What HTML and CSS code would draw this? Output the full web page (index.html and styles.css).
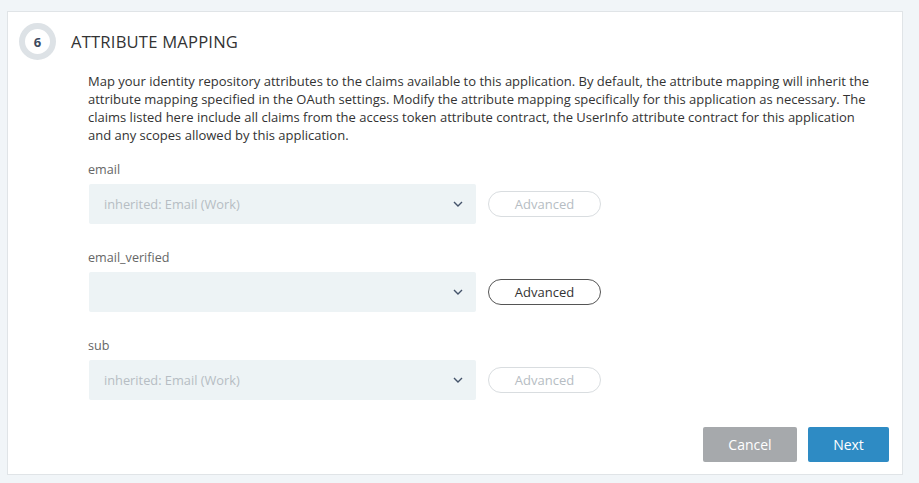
FILE: index.html
```html
<!DOCTYPE html>
<html>
<head>
<meta charset="utf-8">
<link rel="stylesheet" href="styles.css">
</head>
<body>
<div class="card">
  <div class="header">
    <div class="step">6</div>
    <h2 class="title">ATTRIBUTE MAPPING</h2>
  </div>
  <div class="content">
    <p class="desc">Map your identity repository attributes to the claims available to this application. By default, the attribute mapping will inherit the attribute mapping specified in the OAuth settings. Modify the attribute mapping specifically for this application as necessary. The claims listed here include all claims from the access token attribute contract, the UserInfo attribute contract for this application and any scopes allowed by this application.</p>
    <div class="field">
      <div class="label">email</div>
      <div class="row">
        <div class="select"><span class="placeholder">inherited: Email (Work)</span><svg class="chev" width="10" height="6" viewBox="0 0 10 6"><path d="M1 1 L5 5 L9 1" fill="none" stroke="#44536a" stroke-width="1.4"/></svg></div>
        <button class="adv disabled">Advanced</button>
      </div>
    </div>
    <div class="field">
      <div class="label">email_verified</div>
      <div class="row">
        <div class="select"><span class="placeholder"></span><svg class="chev" width="10" height="6" viewBox="0 0 10 6"><path d="M1 1 L5 5 L9 1" fill="none" stroke="#44536a" stroke-width="1.4"/></svg></div>
        <button class="adv">Advanced</button>
      </div>
    </div>
    <div class="field">
      <div class="label">sub</div>
      <div class="row">
        <div class="select"><span class="placeholder">inherited: Email (Work)</span><svg class="chev" width="10" height="6" viewBox="0 0 10 6"><path d="M1 1 L5 5 L9 1" fill="none" stroke="#44536a" stroke-width="1.4"/></svg></div>
        <button class="adv disabled">Advanced</button>
      </div>
    </div>
  </div>
  <div class="footer">
    <button class="btn cancel">Cancel</button>
    <button class="btn next">Next</button>
  </div>
</div>
</body>
</html>
```
FILE: styles.css
```css
html, body {
  margin: 0;
  padding: 0;
  background: #f1f5f8;
  font-family: "Open Sans", "Liberation Sans", sans-serif;
}
body {
  padding: 11px 0 0 7px;
}
.card {
  box-sizing: border-box;
  width: 896px;
  height: 464px;
  background: #fff;
  border: 1px solid #e0e4e7;
  display: flex;
  flex-direction: column;
}
.header {
  display: flex;
  align-items: center;
  padding: 11px 0 0 11px;
  height: 37px;
}
.step {
  box-sizing: border-box;
  width: 37px;
  height: 37px;
  border-radius: 50%;
  border: 6px solid #dde2e6;
  display: flex;
  align-items: center;
  justify-content: center;
  font-size: 13px;
  font-weight: 700;
  color: #3d4b5f;
}
.title {
  margin: 0 0 0 15px;
  font-size: 16.6px;
  font-weight: 400;
  color: #333;
  letter-spacing: 0.2px;
}
.content {
  padding: 12px 0 0 81px;
  flex: 1;
}
.desc {
  margin: 0 0 17px -1px;
  width: 786px;
  font-size: 13px;
  line-height: 18px;
  color: #333;
}
.field {
  margin-bottom: 25px;
}
.label {
  font-size: 12.6px;
  line-height: 18px;
  color: #666;
  margin: 0 0 5px -1px;
}
.row {
  display: flex;
  align-items: center;
  gap: 12px;
}
.select {
  box-sizing: border-box;
  width: 387px;
  height: 40px;
  background: #edf3f5;
  border-radius: 2px;
  display: flex;
  align-items: center;
  justify-content: space-between;
  padding: 0 13px 0 15px;
}
.placeholder {
  font-size: 12.8px;
  color: #b6bdc3;
}
.chev {
  display: block;
}
.adv {
  box-sizing: border-box;
  width: 113px;
  height: 26px;
  border-radius: 13px;
  border: 1px solid #555;
  background: #fff;
  font-family: inherit;
  font-size: 13px;
  color: #333;
  padding: 0;
}
.adv.disabled {
  border-color: #d9dde0;
  color: #b6bdc3;
}
.footer {
  display: flex;
  justify-content: flex-end;
  gap: 11px;
  padding: 0 13px 12px 0;
}
.btn {
  height: 35px;
  border: none;
  border-radius: 2px;
  color: #fff;
  font-family: inherit;
  font-size: 14px;
  padding: 0;
}
.cancel {
  width: 94px;
  background: #a6a9ac;
}
.next {
  width: 81px;
  background: #2e8bc4;
}
```
